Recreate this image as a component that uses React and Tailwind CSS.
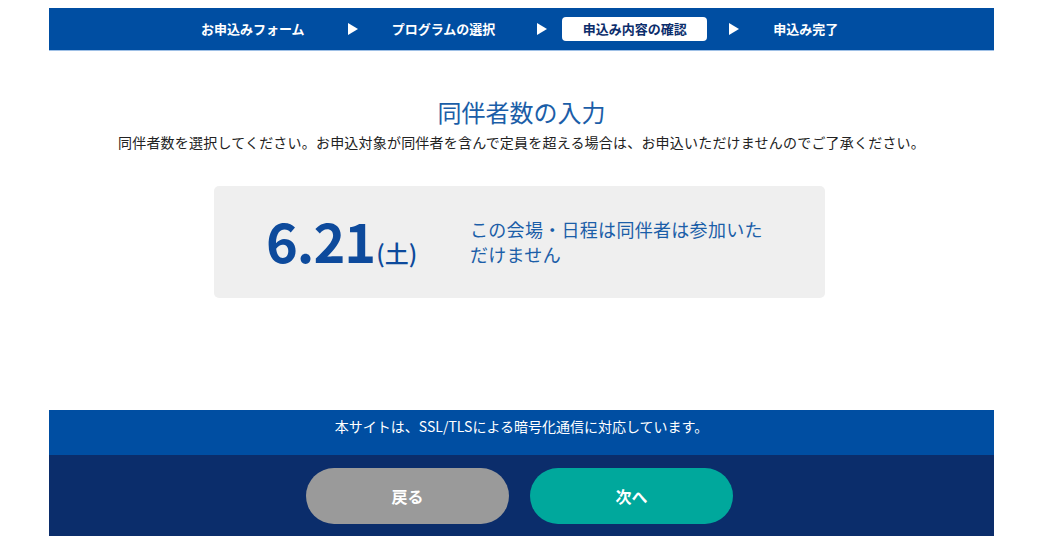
const FONT = { fontFamily: '"Noto Sans CJK JP", "Noto Sans", sans-serif' };

const Arrow = ({ className = '' }) => (
  <svg width="10" height="12" viewBox="0 0 10 12" className={className}>
    <path d="M0 0 L10 6 L0 12 Z" fill="#ffffff" />
  </svg>
);

const Steps = () => (
  <div className="flex h-[43px] items-center bg-[#004ea2] pl-[152px] text-[13px] font-bold text-white border-b border-[#9fc0e6]">
    <span className="whitespace-nowrap">お申込みフォーム</span>
    <Arrow className="ml-[43px]" />
    <span className="ml-[34px] whitespace-nowrap">プログラムの選択</span>
    <Arrow className="ml-[42px]" />
    <span className="ml-[15px] flex h-[24px] w-[145px] items-center justify-center rounded-[4px] bg-white text-[#0b2d6b]">
      申込み内容の確認
    </span>
    <Arrow className="ml-[22px]" />
    <span className="ml-[34px] whitespace-nowrap">申込み完了</span>
  </div>
);

export default function App() {
  return (
    <div className="min-h-[547px] bg-white" style={FONT}>
      <div className="ml-[49px] w-[945px] pt-[8px]">
        <Steps />

        {/* Content */}
        <div className="flex h-[359px] flex-col items-center">
          <h1 className="mt-[45px] text-[24px] leading-[32px] text-[#1b5ea8]">同伴者数の入力</h1>
          <p className="mt-[4px] text-[14px] leading-[20px] tracking-[0.2px] text-[#222]">
            同伴者数を選択してください。お申込対象が同伴者を含んで定員を超える場合は、お申込いただけませんのでご了承ください。
          </p>

          <div className="mr-[4px] mt-[34px] flex h-[112px] w-[611px] items-center rounded-[5px] bg-[#efefef]">
            <div className="ml-[52px] flex w-[200px] items-baseline text-[#0d4a9c]">
              <span className="text-[54px] font-bold leading-none tracking-[-1px]">6.21</span>
              <span className="ml-[1px] text-[24px] font-medium">(土)</span>
            </div>
            <p className="ml-[4px] w-[305px] text-[18px] leading-[25px] tracking-[0.3px] text-[#1b5ea8]">
              この会場・日程は同伴者は参加いただけません
            </p>
          </div>
        </div>

        {/* Footer */}
        <div className="h-[45px] bg-[#004ea2] pt-[6px] text-center text-[14px] text-white">
          本サイトは、SSL/TLSによる暗号化通信に対応しています。
        </div>
        <div className="flex h-[81px] items-center justify-center gap-[21px] bg-[#0b2d6b] pr-[4px]">
          <button className="h-[56px] w-[203px] rounded-full bg-[#9a9a9a] text-[16px] font-bold text-white">
            戻る
          </button>
          <button className="h-[56px] w-[203px] rounded-full bg-[#00a89c] text-[16px] font-bold text-white">
            次へ
          </button>
        </div>
      </div>
    </div>
  );
}
